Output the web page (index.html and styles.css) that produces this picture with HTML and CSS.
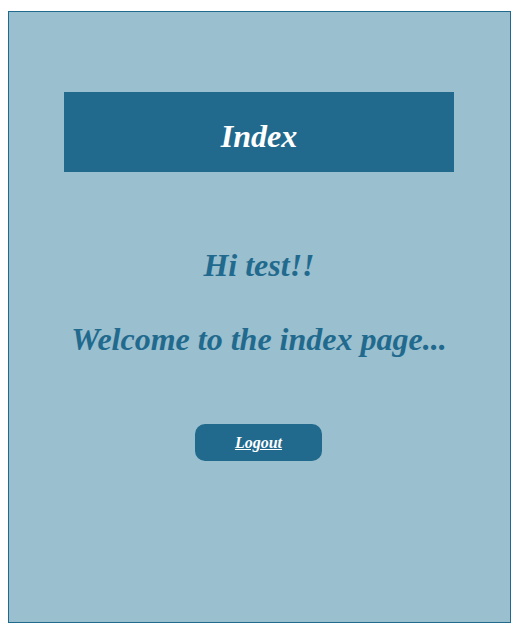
FILE: index.html
```html
<!DOCTYPE html>
<html>
<head>
<meta charset="utf-8">
<link rel="stylesheet" href="styles.css">
</head>
<body>
<div class="page">
  <div class="header"><h1 class="title">Index</h1></div>
  <h2 class="greet">Hi test!!</h2>
  <h2 class="welcome">Welcome to the index page...</h2>
  <a class="logout" href="#">Logout</a>
</div>
</body>
</html>
```
FILE: styles.css
```css
html, body {
  margin: 0;
  padding: 0;
  background: #ffffff;
}
body {
  padding: 11px 10px 0 8px;
  font-family: "Liberation Serif", "Times New Roman", serif;
}
.page {
  box-sizing: border-box;
  width: 503px;
  height: 612px;
  padding-right: 1px;
  border: 1px solid #216a8e;
  background: #9abfcf;
  display: flex;
  flex-direction: column;
  align-items: center;
}
.header {
  box-sizing: border-box;
  width: 390px;
  height: 80px;
  margin-top: 80px;
  background: #216a8e;
  display: flex;
  align-items: center;
  justify-content: center;
}
.title {
  margin: 0;
  color: #ffffff;
  font-style: italic;
  font-weight: bold;
  font-size: 32px;
  line-height: 36px;
  padding-top: 7px;
}
.greet, .welcome {
  margin: 0;
  color: #216a8e;
  font-style: italic;
  font-weight: bold;
  font-size: 32px;
  line-height: 36px;
}
.greet {
  margin-top: 75px;
}
.welcome {
  margin-top: 38px;
}
.logout {
  box-sizing: border-box;
  margin-top: 67px;
  margin-right: 1px;
  width: 127px;
  height: 37px;
  border-radius: 10px;
  background: #216a8e;
  color: #ffffff;
  font-style: italic;
  font-weight: bold;
  font-size: 16px;
  text-decoration: underline;
  display: flex;
  align-items: center;
  justify-content: center;
}
```
